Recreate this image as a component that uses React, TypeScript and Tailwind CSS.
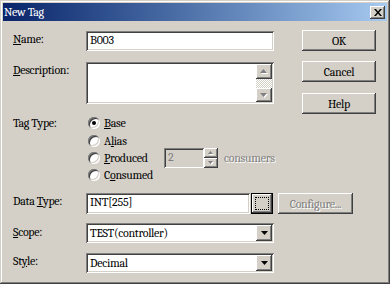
import React from 'react'

const raised =
  'bg-[#d4d0c8] shadow-[inset_-1px_-1px_#404040,inset_1px_1px_#ffffff,inset_-2px_-2px_#808080,inset_2px_2px_#d4d0c8]'
const sunken =
  'shadow-[inset_1px_1px_#808080,inset_-1px_-1px_#ffffff,inset_2px_2px_#404040,inset_-2px_-2px_#d4d0c8]'

function DownArrow({ color = '#000' }: { color?: string }) {
  return (
    <svg width="7" height="4" viewBox="0 0 7 4">
      <path d="M0 0h7L3.5 4z" fill={color} />
    </svg>
  )
}

function GreyArrow({ up, small }: { up?: boolean; small?: boolean }) {
  const w = small ? 5 : 7
  const h = small ? 3 : 4
  const d = up ? `M0 ${h}h${w}L${w / 2} 0z` : `M0 0h${w}L${w / 2} ${h}z`
  return (
    <svg width={w + 1} height={h + 1} viewBox={`0 0 ${w + 1} ${h + 1}`}>
      <path d={d} fill="#ffffff" transform="translate(1 1)" />
      <path d={d} fill="#808080" />
    </svg>
  )
}

function Radio({ checked }: { checked?: boolean }) {
  return (
    <span className="relative flex size-[12px] shrink-0 items-center justify-center rounded-full bg-white shadow-[inset_1px_1px_#808080,inset_-1px_-1px_#ffffff,inset_2px_2px_#404040,inset_-2px_-2px_#d4d0c8]">
      {checked && <span className="size-[4px] rounded-full bg-black" />}
    </span>
  )
}

function Select({ value }: { value: string }) {
  return (
    <div className={`flex h-[20px] w-[188px] items-center bg-white pl-[4px] pr-[2px] ${sunken}`}>
      <span className="flex-1 whitespace-nowrap">{value}</span>
      <span className={`flex h-[16px] w-[16px] items-center justify-center ${raised}`}>
        <DownArrow />
      </span>
    </div>
  )
}

function Label({ children, className = '' }: { children: React.ReactNode; className?: string }) {
  return <div className={`w-[73px] shrink-0 leading-[14px] ${className}`}>{children}</div>
}

export default function App() {
  return (
    <div className="h-[284px] w-[390px] bg-[#d4d0c8] p-[3px] font-serif text-[12px] tracking-[-0.3px] text-black shadow-[inset_-1px_-1px_#404040,inset_1px_1px_#d4d0c8,inset_-2px_-2px_#808080,inset_2px_2px_#ffffff]">
      {/* Title bar */}
      <div className="flex h-[18px] items-center bg-gradient-to-r from-[#0a246a] to-[#a6caf0] pl-[1px] pr-[2px]">
        <span className="flex-1 text-[12px] leading-[14px] text-white">New Tag</span>
        <span className={`flex h-[13px] w-[15px] items-center justify-center ${raised}`}>
          <svg width="8" height="7" viewBox="0 0 8 7">
            <path d="M0 0h2l2 2.5L6 0h2L5 3.5 8 7H6L4 4.5 2 7H0l3-3.5z" fill="#000" />
          </svg>
        </span>
      </div>

      <div className="flex pl-[10px]">
        {/* Form column */}
        <div className="w-[261px] shrink-0">
          {/* Name */}
          <div className="mt-[10px] flex">
            <Label className="pt-[1px]"><u>N</u>ame:</Label>
            <div className={`h-[20px] w-[188px] bg-white pl-[4px] pt-[2px] leading-[14px] ${sunken}`}>B003</div>
          </div>

          {/* Description */}
          <div className="mt-[11px] flex">
            <Label className="pt-[1px]"><u>D</u>escription:</Label>
            <div className={`flex h-[42px] w-[188px] justify-end bg-white p-[2px] ${sunken}`}>
              <div className="flex w-[16px] flex-col">
                <span className={`flex h-[15px] items-center justify-center ${raised}`}><GreyArrow up /></span>
                <span className="flex-1 bg-[repeating-conic-gradient(#ffffff_0_25%,#d4d0c8_0_50%)] bg-[length:2px_2px]" />
                <span className={`flex h-[14px] items-center justify-center ${raised}`}><GreyArrow /></span>
              </div>
            </div>
          </div>

          {/* Tag Type */}
          <div className="mt-[11px] flex">
            <Label className="pt-[1px]">Tag Type:</Label>
            <div className="flex flex-col pl-[2px]">
              <div className="flex h-[16px] items-center gap-[4px]">
                <Radio checked />
                <span><u>B</u>ase</span>
              </div>
              <div className="mt-[2px] flex h-[16px] items-center gap-[4px]">
                <Radio />
                <span>A<u>l</u>ias</span>
              </div>
              <div className="-mt-[1px] flex h-[20px] items-center gap-[4px]">
                <Radio />
                <span className="w-[56px]"><u>P</u>roduced</span>
                <div className="flex">
                  <div className={`h-[20px] w-[40px] bg-[#d4d0c8] pl-[4px] pt-[2px] leading-[14px] text-[#808080] ${sunken}`}>2</div>
                  <div className="flex w-[14px] flex-col">
                    <span className={`flex h-[10px] items-center justify-center ${raised}`}><GreyArrow up small /></span>
                    <span className={`flex h-[10px] items-center justify-center ${raised}`}><GreyArrow small /></span>
                  </div>
                </div>
                <span className="ml-[2px] text-[#808080] [text-shadow:1px_1px_#ffffff]">consumers</span>
              </div>
              <div className="-mt-[1px] flex h-[16px] items-center gap-[4px]">
                <Radio />
                <span>C<u>o</u>nsumed</span>
              </div>
            </div>
          </div>

          {/* Data Type */}
          <div className="mt-[10px] flex">
            <Label className="pt-[1px]">Data <u>T</u>ype:</Label>
            <div className={`h-[21px] w-[164px] shrink-0 bg-white pl-[4px] pt-[2px] leading-[14px] ${sunken}`}>INT[255]</div>
            <div className="ml-[1px] flex h-[21px] w-[22px] shrink-0 border border-black">
              <div className={`flex flex-1 p-[3px] ${raised}`}>
                <span className="flex-1 border border-dotted border-black" />
              </div>
            </div>
            <div className={`ml-[5px] flex h-[21px] w-[75px] shrink-0 items-center justify-center text-[#808080] [text-shadow:1px_1px_#ffffff] ${raised}`}>
              Configure...
            </div>
          </div>

          {/* Scope */}
          <div className="mt-[9px] flex">
            <Label className="pt-[2px]"><u>S</u>cope:</Label>
            <Select value="TEST(controller)" />
          </div>

          {/* Style */}
          <div className="mt-[10px] flex">
            <Label className="pt-[1px]">St<u>y</u>le:</Label>
            <Select value="Decimal" />
          </div>
        </div>

        {/* Buttons */}
        <div className="ml-[28px] mt-[9px] flex w-[74px] flex-col">
          <button className={`h-[21px] ${raised}`}>OK</button>
          <button className={`mt-[10px] h-[21px] ${raised}`}>Cancel</button>
          <button className={`mt-[11px] h-[21px] ${raised}`}>Help</button>
        </div>
      </div>
    </div>
  )
}
